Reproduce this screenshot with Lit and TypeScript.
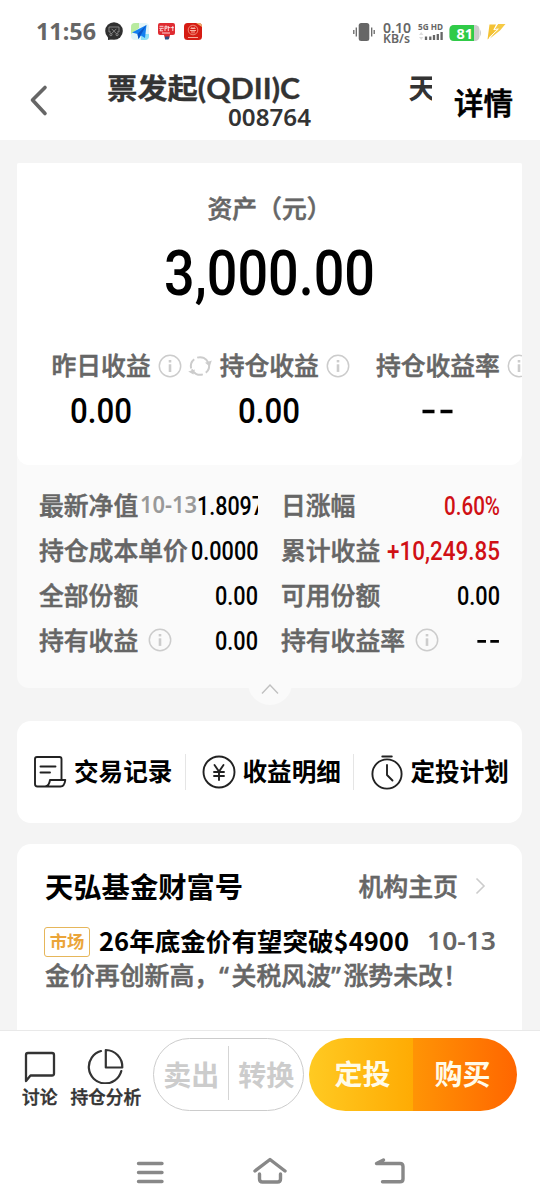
import { LitElement, html, css, svg } from "lit";
import { customElement } from "lit/decorators.js";

type FitOptions = { family?: string; weight?: number; cls?: string; stroke?: number };

const fit = (text: string, width: number, size: number, o: FitOptions = {}) => html`<svg
  class="fit ${o.cls ?? ""}"
  width=${width}
  height=${size}
  viewBox="0 0 ${width} ${size}"
  overflow="visible"
  >${svg`<text x="0" y=${size * 0.86} textLength=${width} lengthAdjust="spacingAndGlyphs"
    font-size=${size} font-weight=${o.weight ?? 500} stroke="currentColor" stroke-width=${o.stroke ?? 0}
    font-family=${o.family ?? "Roboto, 'Liberation Sans', sans-serif"} fill="currentColor">${text}</text>`}</svg>`;

const SANS = "'Noto Sans', 'Noto Sans CJK SC', sans-serif";
const CJK = "'Noto Sans CJK SC', sans-serif";
const TITLE = "Lato, 'Noto Sans CJK SC', sans-serif";

const info = html`<svg class="info" width="24" height="24" viewBox="0 0 24 24" fill="none" stroke="#ccc">
  <circle cx="12" cy="12" r="10.7" stroke-width="1.5" />
  <path d="M12 10.3v7.6" stroke-width="2.6" />
  <path d="M12 6v2.4" stroke-width="2.6" />
</svg>`;

const refresh = html`<svg width="24" height="24" viewBox="0 0 24 24" fill="none" stroke="#ccc" stroke-width="2">
  <path d="M20.2 8.600A8.900 8.900 0 0 0 9.200 3.600M3.800 15.400a8.900 8.900 0 0 0 11 5" />
  <path d="M3.200 14.500a9 9 0 0 1 3-9.300M20.800 9.500a9 9 0 0 1-3 9.300" />
  <path d="M17 8.800l6.800-2.200-2 5.800zM7 15.400l-6.800 2.200 5.200 2.800z" fill="#ccc" stroke="none" />
</svg>`;

@customElement("status-bar")
export class StatusBar extends LitElement {
  static styles = css`
    :host { display: flex; height: 62px; align-items: flex-start; padding: 0 34px 0 36px; box-sizing: border-box; color: #666; }
    .fit { display: block; flex: none; }
    .time { padding-top: 21px; width: 69px; }
    .apps { display: flex; gap: 8px; padding-top: 22px; }
    .vib { margin: 22px 0 0 151px; }
    .speed { margin: 20px 0 0 8px; }
    .speed .fit + .fit { margin-top: -3.500px; }
    .sig { margin: 22px 0 0 7px; }
    .bat { margin: 24px 0 0 6px; }
    .bolt { margin: 23px 0 0 5px; }
    svg { display: block; flex: none; }
  `;
  render() {
    return html`
      <div class="time">${fit("11:56", 60, 22.500, { family: SANS, weight: 700 })}</div>
      <div class="apps">
        <svg width="18" height="19" viewBox="0 0 18 19">
          <circle cx="9" cy="9" r="8.800" fill="#303030" /><path d="M3 14v4l6-1z" fill="#303030" />
          <g fill="none" stroke="#999" stroke-width=".8"><path d="M6 10H4V5h10v5h-2M6.600 6.800l5 5M11.400 6.800l-5 5" /><circle cx="5.900" cy="12.600" r="1.100" /><circle cx="12.100" cy="12.600" r="1.100" /></g>
        </svg>
        <svg width="18" height="19" viewBox="0 0 18 19">
          <rect y="1" width="18" height="17" rx="4" fill="#e3f5f8" /><path d="M0 12V5a4 4 0 0 1 4-4h4v5z" fill="#b9eba0" />
          <path d="M10 12h8v2a4 4 0 0 1-4 4h-4z" fill="#8be0f5" />
          <path d="M1 10.500 15.500 3 14 16l-4-2.500L7.500 17l-1-5z" fill="#137ff0" /><path d="M15.500 3 6.500 12l1 5z" fill="#0a55c8" />
        </svg>
        <svg width="19" height="19" viewBox="0 0 19 19">
          <path d="M3 1h13q2 0 2 2v8q0 2-2 2h-3l-1 4H8l-1-4H3q-2 0-2-2V3q0-2 2-2z" fill="#df2b31" />
          <path d="M2.500 4.300h4M2.300 6.300h4.400M4.300 6.500l-1.300 2.300h3M8 9V4.200h2v2H8M11.300 5.600h2.200M11.300 9V4M14 5.600h2.800M15.800 4v5M5 11h8" fill="none" stroke="#fff" stroke-width=".8" />
          <path d="M8 14.500h4.500l-1 3H8z" fill="#2a4f86" />
        </svg>
        <svg width="18" height="19" viewBox="0 0 18 19">
          <rect y="1" width="18" height="17" rx="3.500" fill="#d61c13" /><path d="M12 1h3q3 0 3 4z" fill="#f0b070" />
          <circle cx="9" cy="8" r="4.800" fill="none" stroke="#f5a08c" stroke-width=".8" />
          <path d="M6.500 6.500h5M6 8.500h6M7.500 4.800l1 1.700M10.500 4.800l-1 1.700M8 8.500v3M10 8.500v3M4 15.500h10" stroke="#ffd0c0" stroke-width=".8" fill="none" />
        </svg>
      </div>
      <svg class="vib" width="22" height="20" viewBox="0 0 22 20">
        <rect x="5.700" y="1" width="10.600" height="18" rx="2.500" fill="#666" />
        <path d="M3.300 5.500v9M18.700 5.500v9M.8 8v4M21.200 8v4" stroke="#666" stroke-width="1.300" />
      </svg>
      <div class="speed">
        ${fit("0.10", 28, 15, { family: SANS, weight: 600 })}
        ${fit("KB/s", 27, 13, { family: SANS, weight: 600 })}
      </div>
      <div class="sig">
        ${fit("5G HD", 25, 8.800, { family: SANS, weight: 700 })}
        <svg width="25" height="10" viewBox="0 0 25 10">
          <path d="M1 4l2.200-3 2.200 3zM1 6l2.200 3 2.200-3z" fill="#ddd" />
          <path d="M8 5.500v3.500M12.300 5.500v3.500M16 4v5M19.800 3v6M23.600 1v8" stroke="#666" stroke-width="2.300" />
        </svg>
      </div>
      <svg class="bat" width="33" height="18" viewBox="0 0 33 18">
        <rect x=".5" y="1" width="30" height="16" rx="4.500" fill="#ccc" /><path d="M31 5.500q2 3.500 0 7z" fill="#ccc" />
        <path d="M5 1h20v16H5Q.5 17 .5 12.500V5.500Q.5 1 5 1z" fill="#30cb48" />
        <text x="7.500" y="14.500" textLength="16.500" lengthAdjust="spacingAndGlyphs" font-family="Noto Sans, sans-serif" font-weight="700" font-size="15" fill="#fff">81</text>
      </svg>
      <svg class="bolt" width="19" height="18" viewBox="0 0 19 18">
        <path d="M2.500 1.500H9L7 7h4L.5 16.500z" fill="#f4c234" /><path d="M11 1h7.500L13 7.500 3 15.500 8 9 6.500 8z" fill="#f6ca45" />
        <path d="M10.300 1 6.800 6.500l4.500-.5L2 14.800" fill="none" stroke="#fff" stroke-width="1" />
      </svg>
    `;
  }
}

@customElement("fund-header")
export class FundHeader extends LitElement {
  static styles = css`
    :host { display: flex; height: 78px; color: #333; font-family: "Noto Sans CJK SC", sans-serif; }
    .back { margin: 21px 0 0 28px; flex: none; }
    .title { width: 325px; margin-left: 57px; padding-top: 9px; overflow: hidden; flex: none; }
    .marquee { display: flex; justify-content: space-between; height: 34px; white-space: nowrap; }
    .fit { display: block; flex: none; margin-top: 3px; }
    .next { width: 23.500px; font-size: 28px; font-weight: 700; line-height: 34px; margin-top: -1.500px; }
    .code { padding-left: 121px; margin-top: 2px; }
    .code .fit { margin: 0; }
    .detail { margin-left: 22px; font-size: 29.500px; line-height: 40px; padding-top: 18.500px; color: #000; font-weight: 500; -webkit-text-stroke: 0.7px currentColor; white-space: nowrap; }
  `;
  render() {
    return html`
      <svg class="back" width="22" height="34" viewBox="0 0 22 34">
        <path d="M17 4.500 4.500 17 17 30.500" fill="none" stroke="#666" stroke-width="3.600" stroke-linecap="round" stroke-linejoin="round" />
      </svg>
      <div class="title">
        <div class="marquee">${fit("票发起(QDII)C", 193, 28.500, { family: TITLE, weight: 700, stroke: 0.3 })}<span class="next">天</span></div>
        <div class="code">${fit("008764", 83, 22.500, { family: SANS, weight: 600 })}</div>
      </div>
      <div class="detail">详情</div>
    `;
  }
}

@customElement("asset-card")
export class AssetCard extends LitElement {
  static styles = css`
    :host { display: block; position: relative; height: 525px; background: #fafafa; border-radius: 2px 2px 12px 12px; color: #666; font: 500 24.800px/34px "Noto Sans CJK SC", sans-serif; -webkit-text-stroke: 0.55px currentColor; }
    svg { display: block; flex: none; -webkit-text-stroke: 0; }
    .fit { color: #000; }
    .top { height: 302px; box-sizing: border-box; background: #fff; border-radius: 2px 2px 12px 12px; overflow: hidden; padding-top: 27px; }
    .cap { text-align: center; }
    .total { display: flex; justify-content: center; margin-top: 16.500px; }
    .labels { display: flex; align-items: center; height: 34px; margin-top: 44px; padding-left: 34.500px; white-space: nowrap; }
    .labels span { flex: none; }
    .labels svg { margin-top: 3px; }
    .i1 { margin-left: 7.500px; margin-right: 6px; }
    .gap { margin-left: 7.500px; }
    .gap2 { margin: 0 25.500px 0 7.500px; }
    .l2 { margin-left: 7.500px; }
    .vals { display: grid; grid-template-columns: 168px 168px 169px; justify-items: center; margin-top: 12px; }
    .vals svg { margin-top: 0; }
    .vals .dash { margin-top: 1px; }
    .rows { display: grid; grid-template-columns: 219px 219px; column-gap: 23px; grid-auto-rows: 45px; padding: 16px 0 0 22px; }
    .cell { display: flex; align-items: center; white-space: nowrap; min-width: 0; overflow: hidden; height: 45px; }
    .cell .fit { margin-left: auto; margin-top: 3px; }
    .cell .fit.up { color: #d01015; }
    .date { margin-left: 2px; }
    .cell .date .fit { margin: 3px 0 0; color: #999; }
    .cell .date + .fit { margin-left: 0; }
    .cell .dash { margin-left: auto; margin-top: 5px; }
    .cell .info { margin: 2px 0 0 10px; }
    .knob { position: absolute; left: 230.500px; bottom: -17px; width: 44px; height: 44px; border-radius: 50%; background: #fafafa; display: grid; place-items: center; }
    .knob svg { margin-top: 11px; }
  `;
  render() {
    const dash = (w: number, h: number) => html`<svg class="dash" width=${w} height=${h} viewBox="0 0 32 14">
      <path d="M.5 7.500h12M18.500 7.500h12" stroke="#000" stroke-width="3.600" />
    </svg>`;
    return html`
      <div class="top">
        <div class="cap">资产（元）</div>
        <div class="total">${fit("3,000.00", 211, 62.500)}</div>
        <div class="labels">
          <span>昨日收益</span><span class="i1">${info}</span>${refresh}
          <span class="l2">持仓收益</span><span class="gap2">${info}</span>
          <span>持仓收益率</span><span class="gap">${info}</span>
        </div>
        <div class="vals">${fit("0.00", 62, 35)}${fit("0.00", 62, 35)}${dash(32, 34)}</div>
      </div>
      <div class="rows">
        <div class="cell">最新净值<span class="date">${fit("10-13", 57, 22.500, { family: SANS, weight: 600 })}</span>${fit("1.8097", 67, 25)}</div>
        <div class="cell">日涨幅${fit("0.60%", 56, 25, { cls: "up" })}</div>
        <div class="cell">持仓成本单价${fit("0.0000", 67.500, 25)}</div>
        <div class="cell">累计收益${fit("+10,249.85", 113, 25, { cls: "up" })}</div>
        <div class="cell">全部份额${fit("0.00", 43, 25)}</div>
        <div class="cell">可用份额${fit("0.00", 43, 25)}</div>
        <div class="cell">持有收益${info}${fit("0.00", 43, 25)}</div>
        <div class="cell">持有收益率${info}${dash(23, 14)}</div>
      </div>
      <div class="knob">
        <svg width="20" height="12" viewBox="0 0 20 12"><path d="M2 10.500 10 2l8 8.500" fill="none" stroke="#c0c0c0" stroke-width="1.400" /></svg>
      </div>
    `;
  }
}

@customElement("quick-actions")
export class QuickActions extends LitElement {
  static styles = css`
    :host { display: grid; grid-template-columns: 167.500px 168px 169.500px; height: 102px; background: #fff; border-radius: 14px; color: #000; font: 700 24.600px/34px "Noto Sans CJK SC", sans-serif; align-items: center; }
    .item { display: flex; align-items: center; gap: 7px; height: 36px; padding-left: 16px; white-space: nowrap; }
    .item + .item { border-left: 1px solid #e5e5e5; }
    .item span { margin-top: -4px; }
    svg { display: block; flex: none; margin-top: -1px; }
  `;
  render() {
    return html`
      <div class="item">
        <svg width="34" height="34" viewBox="0 0 34 34" fill="none" stroke="#222" stroke-width="1.900" stroke-linejoin="round" stroke-linecap="round">
          <path d="M28.500 24V4q0-2-2-2H4Q2 2 2 4v25q0 2.500 2.500 2.500h23q4 0 4.800-6.500H17q-1 6.500-5 6.500" />
          <path d="M7.500 11.500h15M7.500 17.500h9.500" />
        </svg>
        <span>交易记录</span>
      </div>
      <div class="item">
        <svg width="34" height="34" viewBox="0 0 34 34" fill="none" stroke="#222" stroke-width="1.900" stroke-linecap="round">
          <circle cx="17" cy="17" r="15.500" />
          <path d="M12.500 10 17 16.500 21.500 10M17 16.500V25M12 17h10M12 21h10" />
        </svg>
        <span>收益明细</span>
      </div>
      <div class="item">
        <svg width="34" height="36" viewBox="0 0 34 36" fill="none" stroke="#222" stroke-width="1.900" stroke-linecap="round" stroke-linejoin="round">
          <circle cx="17" cy="20" r="14.600" /><path d="M12.300 2.500h9.500" /><path d="M17 11v10l5.500 5.500" />
        </svg>
        <span>定投计划</span>
      </div>
    `;
  }
}

@customElement("news-card")
export class NewsCard extends LitElement {
  static styles = css`
    :host { display: block; height: 186px; box-sizing: border-box; background: #fff; border-radius: 14px 14px 0 0; padding: 22px 26px 0 28px; font: 500 24.900px/34px "Noto Sans CJK SC", sans-serif; color: #666; white-space: nowrap; }
    svg { display: block; flex: none; -webkit-text-stroke: 0; }
    .head { display: flex; align-items: center; height: 40px; }
    .home, .sub { -webkit-text-stroke: 0.55px currentColor; }
    .home { margin-top: -2px; }
    .name { color: #000; font-size: 28.300px; font-weight: 700; margin-right: auto; margin-top: -1px; }
    .head svg { margin: 0 10px 0 17px; }
    .line { display: flex; align-items: center; margin-top: 19px; height: 34px; }
    .tag { box-sizing: border-box; width: 46px; height: 30px; margin-left: -1px; border: 1px solid #e6b65a; border-radius: 3px; color: #eba53a; font: 700 17.300px/26px "Noto Sans CJK SC", sans-serif; text-align: center; flex: none; }
    .title { color: #000; margin-left: 8.500px; margin-top: -1px; }
    .date { margin-left: auto; margin-top: -1px; }
    .sub { line-height: 34px; margin-top: -2px; }
    .q { display: inline-block; width: 12.300px; font-family: "Noto Sans"; line-height: 20px; }
  `;
  render() {
    return html`
      <div class="head">
        <span class="name">天弘基金财富号</span><span class="home">机构主页</span>
        <svg width="11" height="18" viewBox="0 0 11 18"><path d="M1.500 1.500 9 9l-7.500 7.500" fill="none" stroke="#ccc" stroke-width="1.600" /></svg>
      </div>
      <div class="line">
        <span class="tag">市场</span>
        <span class="title">${fit("26年底金价有望突破$4900", 310, 25.300, { family: CJK, weight: 700 })}</span>
        <span class="date">${fit("10-13", 69, 24.500, { family: SANS, weight: 600 })}</span>
      </div>
      <div class="sub">金价再创新高，<span class="q">“</span>关税风波<span class="q">”</span>涨势未改！</div>
    `;
  }
}

@customElement("trade-bar")
export class TradeBar extends LitElement {
  static styles = css`
    :host { display: flex; height: 95px; box-sizing: border-box; background: #fff; border-top: 1px solid #e9e9e9; padding: 7px 23px 0 22px; font-family: "Noto Sans CJK SC", sans-serif; white-space: nowrap; color: #333; }
    svg { display: block; }
    .tool { display: flex; flex-direction: column; align-items: center; font-size: 17.700px; font-weight: 500; line-height: 24px; -webkit-text-stroke: 0.5px currentColor; }
    .tool svg { margin-top: 10px; margin-bottom: -0.500px; }
    .tool + .tool { margin-left: 13px; }
    .tool + .tool svg { margin-left: -2px; }
    .pill { display: flex; align-items: center; box-sizing: border-box; height: 73px; border-radius: 37px; font-size: 28px; font-weight: 700; line-height: 71px; text-align: center; }
    .ghost { width: 151px; border: 1px solid #ccc; margin-left: 12px; color: #ccc; }
    .ghost span { width: 74px; line-height: 56px; height: 54px; margin-top: -3px; }
    .ghost span + span { border-left: 1px solid #d5d5d5; }
    .solid { width: 208px; margin-left: 5px; overflow: hidden; color: #fffbe8; }
    .solid span { width: 104px; height: 73px; }
    .plan { background: linear-gradient(90deg, #ffca22, #ffab03); text-indent: 3px; }
    .buy { background: linear-gradient(90deg, #ff9405, #ff6600); text-indent: -5px; }
  `;
  render() {
    return html`
      <div class="tool">
        <svg width="34" height="36" viewBox="0 0 34 36" fill="none" stroke="#333" stroke-width="2.300" stroke-linejoin="round"><path d="M3 33V7q0-2 2-2h24q2 0 2 2v18.500q0 2-2 2H7.500z" /></svg>
        讨论
      </div>
      <div class="tool">
        <svg width="38" height="36" viewBox="0 0 38 36" fill="none" stroke="#333" stroke-width="2.200" stroke-linejoin="round" stroke-linecap="round">
          <path d="M15 3A16.500 16.500 0 1 0 35.300 23" /><path d="M19.800 2v17.500h16.500A16.800 16.800 0 0 0 19.800 2z" />
        </svg>
        持仓分析
      </div>
      <div class="pill ghost"><span>卖出</span><span>转换</span></div>
      <div class="pill solid"><span class="plan">定投</span><span class="buy">购买</span></div>
    `;
  }
}

@customElement("nav-keys")
export class NavKeys extends LitElement {
  static styles = css`
    :host { display: flex; gap: 84px; justify-content: center; align-items: flex-start; height: 79px; box-sizing: border-box; padding-top: 29px; background: #fff; }
    svg { display: block; fill: none; stroke: #888; stroke-width: 3.400; stroke-linecap: round; stroke-linejoin: round; }
  `;
  render() {
    return html`
      <svg width="36" height="36" viewBox="0 0 36 36"><path d="M6.500 9.500h23.500M6.500 18.500h23.500M6.500 27.500h23.500" /></svg>
      <svg width="36" height="36" viewBox="0 0 36 36"><path d="M3 17 18 5.500 33 17M7.500 20v5q0 3 3 3h15q3 0 3-3v-5" /></svg>
      <svg width="36" height="36" viewBox="0 0 36 36"><path d="M11.500 6 4.500 9.500H28q3 0 3 3V25q0 2.800-3 2.800H10.500" /></svg>
    `;
  }
}

@customElement("app-root")
export class AppRoot extends LitElement {
  static styles = css`
    :host { display: flex; flex-direction: column; width: 540px; height: 1204px; background: #fff; overflow: hidden; }
    main { display: flex; flex-direction: column; height: 890px; box-sizing: border-box; padding: 23px 18px 0 17px; background: #f4f4f4; }
    quick-actions { margin-top: 33px; }
    news-card { margin-top: 21px; }
  `;
  render() {
    return html`
      <status-bar></status-bar>
      <fund-header></fund-header>
      <main>
        <asset-card></asset-card>
        <quick-actions></quick-actions>
        <news-card></news-card>
      </main>
      <trade-bar></trade-bar>
      <nav-keys></nav-keys>
    `;
  }
}
